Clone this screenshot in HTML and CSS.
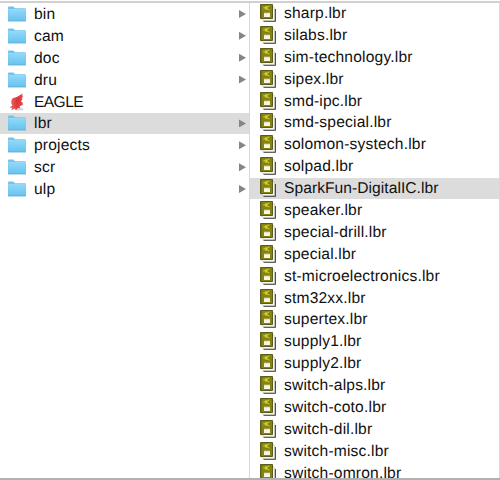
FILE: index.html
```
<!DOCTYPE html>
<html lang="en">
<head>
<meta charset="utf-8">
<title>EAGLE libraries</title>
<link rel="stylesheet" href="styles.css">
</head>
<body>
<svg class="defs" aria-hidden="true">
  <defs>
    <linearGradient id="blue" x1="0" y1="0" x2="0" y2="1"><stop offset="0" stop-color="#8ed8fa"/><stop offset="1" stop-color="#69c3ef"/></linearGradient>
    <linearGradient id="red" x1="0" y1="0" x2="1" y2="0"><stop offset="0" stop-color="#ee7072"/><stop offset=".5" stop-color="#e23a3c"/><stop offset="1" stop-color="#e5484b"/></linearGradient>
  </defs>
  <symbol id="folder" viewBox="0 0 20 18">
    <path d="M1 2.6Q1 1.6 2 1.6H6.3L8 3.2H18Q19 3.2 19 4.2V15.9H1Z" fill="#72c4ea"/>
    <path d="M1.4 4.9H18.6V15.5H1.4Z" fill="url(#blue)"/>
    <path d="M1 4.5H19" stroke="#a5e1fb" stroke-width=".7"/>
    <path d="M1 16H19" stroke="#5aa9cf" stroke-width=".8"/>
  </symbol>
  <symbol id="eagle" viewBox="0 0 20 18">
    <ellipse cx="12" cy="16.2" rx="4.5" ry="1.2" fill="#d4d0d0"/>
    <path d="M15.6 .3L12 2.8 9 4.2 5.5 5.2 4.2 8 4.4 10.8 5.4 12.2 4 13.6 2.6 14.8 5 14.8 4.4 17.2 7.6 15.5 9 17 10.6 15.2 13.4 14.8 12.6 13.2 16 11.8 15.6 9.6 14 8.4 15.6 5.6 14.8 5.2 16.2 2.8 15 2.6Z" fill="url(#red)"/>
    <path d="M12.6 4.4L9.2 8.2M13.4 6.6L10.4 10.4" stroke="#c72b31" stroke-width=".7"/>
  </symbol>
  <symbol id="library" viewBox="0 0 17 18">
    <path d="M3.5 17.2H15.3V5" fill="none" stroke="#30302a" stroke-width="1.1"/>
    <path d="M.8 14.5L3.2 16.6H14.6V4L12 1Z" fill="#f7f7f1" stroke="#8c8c80" stroke-width=".4"/>
    <path d="M.5 .5H12.5V14.5H.5Z" fill="#858312" stroke="#5b5b1c" stroke-width="1"/>
    <path d="M1.5 1V14" stroke="#74741c"/>
    <path d="M3.4 3.9H6M6 2V6M6 3.9L9.3 1.8M6 3.9L9.3 6.2" fill="none" stroke="#dde032" stroke-width="1"/>
    <path d="M4 9H10V13H4Z" fill="#f7f6e6"/>
    <path d="M4 8.5H10V9.3H4Z" fill="#bab878"/>
  </symbol>
</svg>
<main class="browser">
  <ul class="column folders">
    <li class="row"><svg class="folder"><use href="#folder"/></svg><span>bin</span><i class="arrow"></i></li>
    <li class="row"><svg class="folder"><use href="#folder"/></svg><span>cam</span><i class="arrow"></i></li>
    <li class="row"><svg class="folder"><use href="#folder"/></svg><span>doc</span><i class="arrow"></i></li>
    <li class="row"><svg class="folder"><use href="#folder"/></svg><span>dru</span><i class="arrow"></i></li>
    <li class="row"><svg class="folder"><use href="#eagle"/></svg><span class="app">EAGLE</span></li>
    <li class="row selected"><svg class="folder"><use href="#folder"/></svg><span>lbr</span><i class="arrow"></i></li>
    <li class="row"><svg class="folder"><use href="#folder"/></svg><span>projects</span><i class="arrow"></i></li>
    <li class="row"><svg class="folder"><use href="#folder"/></svg><span>scr</span><i class="arrow"></i></li>
    <li class="row"><svg class="folder"><use href="#folder"/></svg><span>ulp</span><i class="arrow"></i></li>
  </ul>
  <ul class="column files">
    <li class="row"><svg class="library"><use href="#library"/></svg><span>sharp.lbr</span></li>
    <li class="row"><svg class="library"><use href="#library"/></svg><span>silabs.lbr</span></li>
    <li class="row"><svg class="library"><use href="#library"/></svg><span>sim-technology.lbr</span></li>
    <li class="row"><svg class="library"><use href="#library"/></svg><span>sipex.lbr</span></li>
    <li class="row"><svg class="library"><use href="#library"/></svg><span>smd-ipc.lbr</span></li>
    <li class="row"><svg class="library"><use href="#library"/></svg><span>smd-special.lbr</span></li>
    <li class="row"><svg class="library"><use href="#library"/></svg><span>solomon-systech.lbr</span></li>
    <li class="row"><svg class="library"><use href="#library"/></svg><span>solpad.lbr</span></li>
    <li class="row selected"><svg class="library"><use href="#library"/></svg><span>SparkFun-DigitalIC.lbr</span></li>
    <li class="row"><svg class="library"><use href="#library"/></svg><span>speaker.lbr</span></li>
    <li class="row"><svg class="library"><use href="#library"/></svg><span>special-drill.lbr</span></li>
    <li class="row"><svg class="library"><use href="#library"/></svg><span>special.lbr</span></li>
    <li class="row"><svg class="library"><use href="#library"/></svg><span>st-microelectronics.lbr</span></li>
    <li class="row"><svg class="library"><use href="#library"/></svg><span>stm32xx.lbr</span></li>
    <li class="row"><svg class="library"><use href="#library"/></svg><span>supertex.lbr</span></li>
    <li class="row"><svg class="library"><use href="#library"/></svg><span>supply1.lbr</span></li>
    <li class="row"><svg class="library"><use href="#library"/></svg><span>supply2.lbr</span></li>
    <li class="row"><svg class="library"><use href="#library"/></svg><span>switch-alps.lbr</span></li>
    <li class="row"><svg class="library"><use href="#library"/></svg><span>switch-coto.lbr</span></li>
    <li class="row"><svg class="library"><use href="#library"/></svg><span>switch-dil.lbr</span></li>
    <li class="row"><svg class="library"><use href="#library"/></svg><span>switch-misc.lbr</span></li>
    <li class="row"><svg class="library"><use href="#library"/></svg><span>switch-omron.lbr</span></li>
  </ul>
</main>
</body>
</html>
```
FILE: styles.css
```
* { box-sizing: border-box; }
body { margin: 0; background: #fff; color: #111; font: 15.6px/20px "Liberation Sans", Arial, sans-serif; letter-spacing: .18px; text-rendering: geometricPrecision; }
.defs { position: absolute; width: 0; height: 0; }
.browser { display: grid; grid-template-columns: 250px 250px; width: 500px; height: 480px; padding-top: 1px; border-bottom: 2px solid #b1b1b1; overflow: hidden; }
.column { margin: 0; padding: 1px 0 0; list-style: none; min-width: 0; height: 477px; overflow: hidden; border-top: 2px solid #d0d0d0; border-right: 1px solid #d8d8d8; }
.files { padding-top: 0; }
.row { display: flex; align-items: center; height: 21.9px; padding-bottom: 2px; white-space: nowrap; }
.row span { padding-top: 2px; }
.selected { background: linear-gradient(#dcdcdc, #dcdcdc) 0 0 / 100% 21px no-repeat; }
.folders .row { padding-left: 7px; padding-right: 3px; }
.files .row { padding-left: 10px; }
.folder { width: 20px; height: 18px; margin-right: 7px; flex: none; }
.library { width: 17px; height: 18px; margin-right: 7px; flex: none; }
.app { letter-spacing: -.6px; }
.files .selected { letter-spacing: .05px; }
.arrow { width: 7px; height: 8px; margin-left: auto; background: #858585; clip-path: polygon(0 0, 100% 50%, 0 100%); }
```
